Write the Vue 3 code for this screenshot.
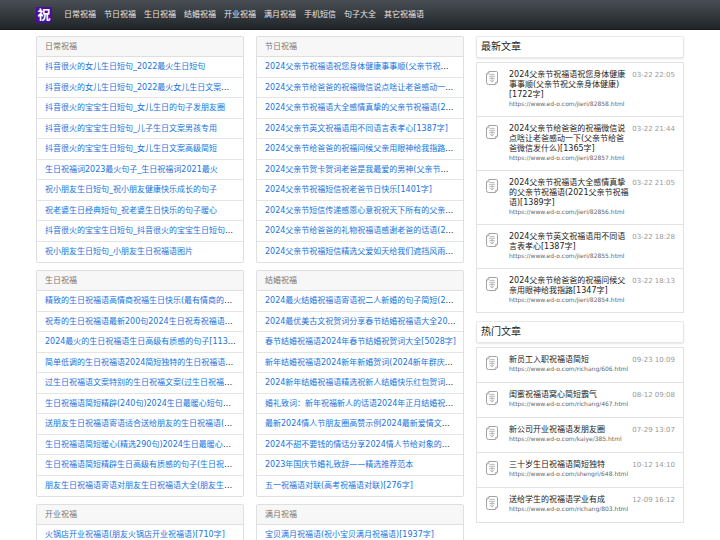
<template>
  <header class="navbar">
    <a href="#" class="logo">祝</a>
    <nav>
      <a v-for="item in menu" :key="item" href="#">{{ item }}</a>
    </nav>
  </header>

  <main class="container">
    <div v-for="(column, i) in columns" :key="i" class="column">
      <section v-for="card in column" :key="card.title" class="card">
        <h2 class="card-header">{{ card.title }}</h2>
        <ul>
          <li v-for="link in card.links" :key="link"><a href="#">{{ link }}</a></li>
        </ul>
      </section>
    </div>

    <aside class="sidebar">
      <section v-for="group in articles" :key="group.title">
        <h2 class="side-title">{{ group.title }}</h2>
        <ul class="article-list">
          <li v-for="item in group.items" :key="item.url" class="article">
            <svg class="icon" viewBox="0 0 14 16" fill="none" stroke="#999">
              <path d="M4 1.5h7.2q1.3 0 1.3 1.3v9.4l-2.2 2.3H3.5q-2 0-2-2V4z" stroke-width="0.9" />
              <path d="M1.5 4h1.3Q4 4 4 2.8V1.5M10.3 14.5v-1.3q0-1 1-1h1.2" stroke-width="0.8" />
              <path d="M4.7 4.4h5M4 6.3h6.2M7.1 6.3v5.4M4.4 8.4h5.4M4.8 9.8l2.3 2.2 2.3-2.2" stroke="#aaa" stroke-width="0.8" />
            </svg>
            <div class="info">
              <a href="#">{{ item.title }}</a>
              <p>{{ base }}{{ item.url }}</p>
            </div>
            <time>{{ item.time }}</time>
          </li>
        </ul>
      </section>
    </aside>
  </main>
</template>

<script setup>
const base = 'https://www.ed-o.com/';

const menu = ['日常祝福', '节日祝福', '生日祝福', '结婚祝福', '开业祝福', '满月祝福', '手机短信', '句子大全', '其它祝福语'];

const columns = [
  [
    {
      title: '日常祝福',
      links: [
        '抖音很火的女儿生日短句_2022最火生日短句',
        '抖音很火的女儿生日短句_2022最火女儿生日文案短句',
        '抖音很火的宝宝生日短句_女儿生日的句子发朋友圈',
        '抖音很火的宝宝生日短句_儿子生日文案男孩专用',
        '抖音很火的宝宝生日短句_女儿生日文案高级简短',
        '生日祝福词2023最火句子_生日祝福词2021最火',
        '祝小朋友生日短句_祝小朋友健康快乐成长的句子',
        '祝老婆生日经典短句_祝老婆生日快乐的句子暖心',
        '抖音很火的宝宝生日短句_抖音很火的宝宝生日短句大全',
        '祝小朋友生日短句_小朋友生日祝福语图片'
      ]
    },
    {
      title: '生日祝福',
      links: [
        '精致的生日祝福语高情商祝福生日快乐(最有情商的生日祝福)',
        '祝寿的生日祝福语最新200句2024生日祝寿祝福语大全',
        '2024最火的生日祝福语生日高级有质感的句子[1135字]',
        '简单低调的生日祝福语2024简短独特的生日祝福语大全',
        '过生日祝福语文案特别的生日祝福文案(过生日祝福语简短)',
        '生日祝福语简短精辟(240句)2024生日最暖心短句大全',
        '送朋友生日祝福语寄语适合送给朋友的生日祝福语(简短)',
        '生日祝福语简短暖心(精选290句)2024生日最暖心短句',
        '生日祝福语简短精辟生日高级有质感的句子(生日祝福语)',
        '朋友生日祝福语寄语对朋友生日祝福语大全(朋友生日祝福)'
      ]
    },
    {
      title: '开业祝福',
      links: ['火锅店开业祝福语(朋友火锅店开业祝福语)[710字]']
    }
  ],
  [
    {
      title: '节日祝福',
      links: [
        '2024父亲节祝福语祝您身体健康事事顺(父亲节祝父亲身体健康)[1722字]',
        '2024父亲节给爸爸的祝福微信说点啥让老爸感动一下(父亲节给爸爸微信发什么)[1365字]',
        '2024父亲节祝福语大全感情真挚的父亲节祝福语(2021父亲节祝福语)[1389字]',
        '2024父亲节英文祝福语用不同语言表孝心[1387字]',
        '2024父亲节给爸爸的祝福问候父亲用眼神给我指路[1347字]',
        '2024父亲节贺卡贺词老爸是我最爱的男神(父亲节贺卡祝福语)',
        '2024父亲节祝福短信祝老爸节日快乐[1401字]',
        '2024父亲节短信传递感恩心意祝祝天下所有的父亲节日快乐',
        '2024父亲节给爸爸的礼物祝福语感谢老爸的话语(2021父亲节)',
        '2024父亲节祝福短信精选父爱如天给我们遮挡风雨的祝福'
      ]
    },
    {
      title: '结婚祝福',
      links: [
        '2024最火结婚祝福语寄语祝二人新婚的句子简短(2024结婚祝福)',
        '2024最优美古文祝贺词分享春节结婚祝福语大全2024',
        '春节结婚祝福语2024年春节结婚祝贺词大全[5028字]',
        '新年结婚祝福语2024新年新婚贺词(2024新年群庆祝福语)',
        '2024新年结婚祝福语精选祝新人结婚快乐红包贺词大全',
        '婚礼致词：新年祝福新人的话语2024年正月结婚祝福语',
        '最新2024情人节朋友圈高赞示例2024最新爱情文案大全',
        '2024不甜不要钱的情话分享2024情人节给对象的情话',
        '2023年国庆节婚礼致辞——精选推荐范本',
        '五一祝福语对联(高考祝福语对联)[276字]'
      ]
    },
    {
      title: '满月祝福',
      links: ['宝贝满月祝福语(祝小宝贝满月祝福语)[1937字]']
    }
  ]
];

const articles = [
  {
    title: '最新文章',
    items: [
      { title: '2024父亲节祝福语祝您身体健康事事顺(父亲节祝父亲身体健康)[1722字]', url: 'jieri/82858.html', time: '03-22 22:05' },
      { title: '2024父亲节给爸爸的祝福微信说点啥让老爸感动一下(父亲节给爸爸微信发什么)[1365字]', url: 'jieri/82857.html', time: '03-22 21:44' },
      { title: '2024父亲节祝福语大全感情真挚的父亲节祝福语(2021父亲节祝福语)[1389字]', url: 'jieri/82856.html', time: '03-22 21:05' },
      { title: '2024父亲节英文祝福语用不同语言表孝心[1387字]', url: 'jieri/82855.html', time: '03-22 18:28' },
      { title: '2024父亲节给爸爸的祝福问候父亲用眼神给我指路[1347字]', url: 'jieri/82854.html', time: '03-22 18:13' }
    ]
  },
  {
    title: '热门文章',
    items: [
      { title: '新员工入职祝福语简短', url: 'richang/606.html', time: '09-23 10:09' },
      { title: '闺蜜祝福语窝心简短霸气', url: 'richang/467.html', time: '08-12 09:08' },
      { title: '新公司开业祝福语发朋友圈', url: 'kaiye/385.html', time: '07-29 13:07' },
      { title: '三十岁生日祝福语简短独特', url: 'shengri/648.html', time: '10-12 14:10' },
      { title: '送给学生的祝福语学业有成', url: 'richang/803.html', time: '12-09 16:12' }
    ]
  }
];
</script>

<style>
body {
  margin: 0;
  background: #fff;
  color: #212529;
  font: 8px/12px "DejaVu Sans", "Noto Sans CJK SC", sans-serif;
}
</style>

<style scoped>
* { box-sizing: border-box; }
h2, p, ul {
  margin: 0;
  padding: 0;
  font-weight: normal;
}
ul { list-style: none; }
a { text-decoration: none; }

.navbar {
  display: flex;
  align-items: center;
  height: 30px;
  padding: 0 5%;
  background: linear-gradient(#484e53, #212529);
  border-bottom: 1px solid #17191b;
}
.logo {
  width: 16px;
  height: 16px;
  background: #4b0d9c;
  color: #fff;
  font-size: 13px;
  font-weight: bold;
  line-height: 16px;
  text-align: center;
}
nav {
  display: flex;
  gap: 8px;
  margin-left: 12px;
}
nav a { color: #e6e7e8; }

.container {
  display: grid;
  grid-template-columns: repeat(3, minmax(0, 1fr));
  gap: 12px;
  align-items: start;
  padding: 6px 5% 12px;
}
.column {
  display: grid;
  gap: 7px;
}
.sidebar {
  display: grid;
  gap: 8px;
}
.card {
  min-width: 0;
  border: 1px solid #dfdfdf;
  border-radius: 2px;
}
.card-header {
  height: 20px;
  padding: 4px 8px 3px;
  background: #f7f7f7;
  border-bottom: 1px solid #dfdfdf;
  color: #777;
  font-size: 8px;
}
.card li {
  height: 21px;
  padding: 4px 7px 4px 8px;
  border-bottom: 1px solid #e4e4e4;
  overflow: hidden;
  text-overflow: ellipsis;
  white-space: nowrap;
}
.card li:nth-child(even) { height: 20px; }
.card li:last-child { border-bottom: 0; }
.card a { color: #1473e0; }

.side-title {
  padding: 3px 4px;
  border: 1px solid #e8e8e8;
  border-radius: 2px;
  box-shadow: 0 1px 2px rgba(0, 0, 0, 0.1);
  font-size: 10px;
  line-height: 14px;
}
.article-list {
  margin-top: 4px;
  border: 1px solid #e2e2e2;
  border-bottom: 0;
}
.article {
  display: flex;
  align-items: flex-start;
  min-height: 35px;
  padding: 7px 8px 8px;
  border-bottom: 1px solid #e2e2e2;
}
.icon {
  flex: none;
  width: 14px;
  height: 16px;
}
.info {
  flex: 1;
  min-width: 0;
  margin: 0 3px 0 10px;
  line-height: 10px;
}
.info a {
  display: block;
  color: #222;
}
.info p {
  color: #666;
  font-size: 6px;
  line-height: 8px;
}
time {
  color: #999;
  font-size: 7px;
  line-height: 10px;
  white-space: nowrap;
}
</style>
